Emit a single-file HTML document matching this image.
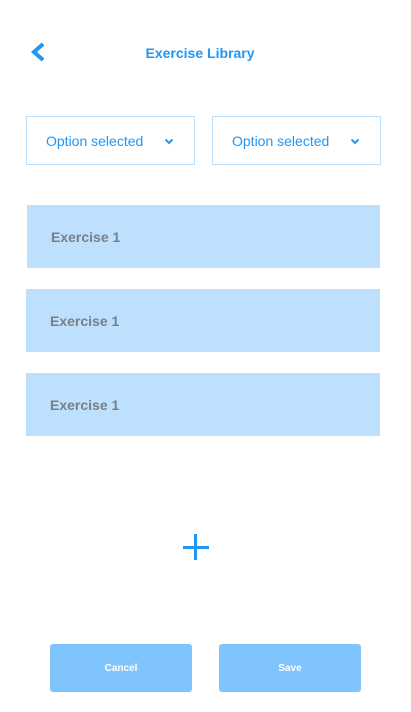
<!DOCTYPE html>
<html><head><style>
body{margin:0;width:411px;height:712px;background:#fff;font-family:"Liberation Sans",sans-serif;position:relative;overflow:hidden}
.a{position:absolute}
.title{left:0;width:400px;top:45px;text-align:center;color:#2196f3;font-weight:bold;font-size:14px}
.dd{border:1px solid #bfe0fd;box-sizing:border-box;height:49px;top:116px;color:#2196f3;font-size:14px}
.dd span{position:absolute;left:19px;top:16px}
.dd svg{position:absolute;right:20px;top:21px}
.ex{background:#bde0fe;height:63px;left:26px;width:354px;color:#7a7f85;font-weight:bold;font-size:14px}
.ex span{position:absolute;left:24px;top:24px}
.btn{background:#80c4fd;border-radius:3px;top:644px;width:142px;height:48px;color:#fff;font-weight:bold;font-size:10px;text-align:center;line-height:50px}
</style></head><body>
<svg class="a" style="left:29px;top:41px" width="18" height="22" viewBox="0 0 18 22"><path d="M14 3 L5 11 L14 19" fill="none" stroke="#2196f3" stroke-width="4"/></svg>
<div class="a title">Exercise Library</div>
<div class="a dd" style="left:26px;width:169px"><span>Option selected</span><svg width="10" height="7" viewBox="0 0 10 7"><path d="M1.5 1.5 L5 5 L8.5 1.5" fill="none" stroke="#2196f3" stroke-width="2"/></svg></div>
<div class="a dd" style="left:212px;width:169px"><span>Option selected</span><svg width="10" height="7" viewBox="0 0 10 7"><path d="M1.5 1.5 L5 5 L8.5 1.5" fill="none" stroke="#2196f3" stroke-width="2"/></svg></div>
<div class="a ex" style="top:205px;left:27px;width:353px"><span>Exercise 1</span></div>
<div class="a ex" style="top:289px"><span>Exercise 1</span></div>
<div class="a ex" style="top:373px"><span>Exercise 1</span></div>
<div class="a" style="left:183px;top:546px;width:26px;height:3px;background:#2196f3"></div>
<div class="a" style="left:194px;top:534px;width:3px;height:26px;background:#2196f3"></div>
<div class="a btn" style="left:50px">Cancel</div>
<div class="a btn" style="left:219px">Save</div>
</body></html>
